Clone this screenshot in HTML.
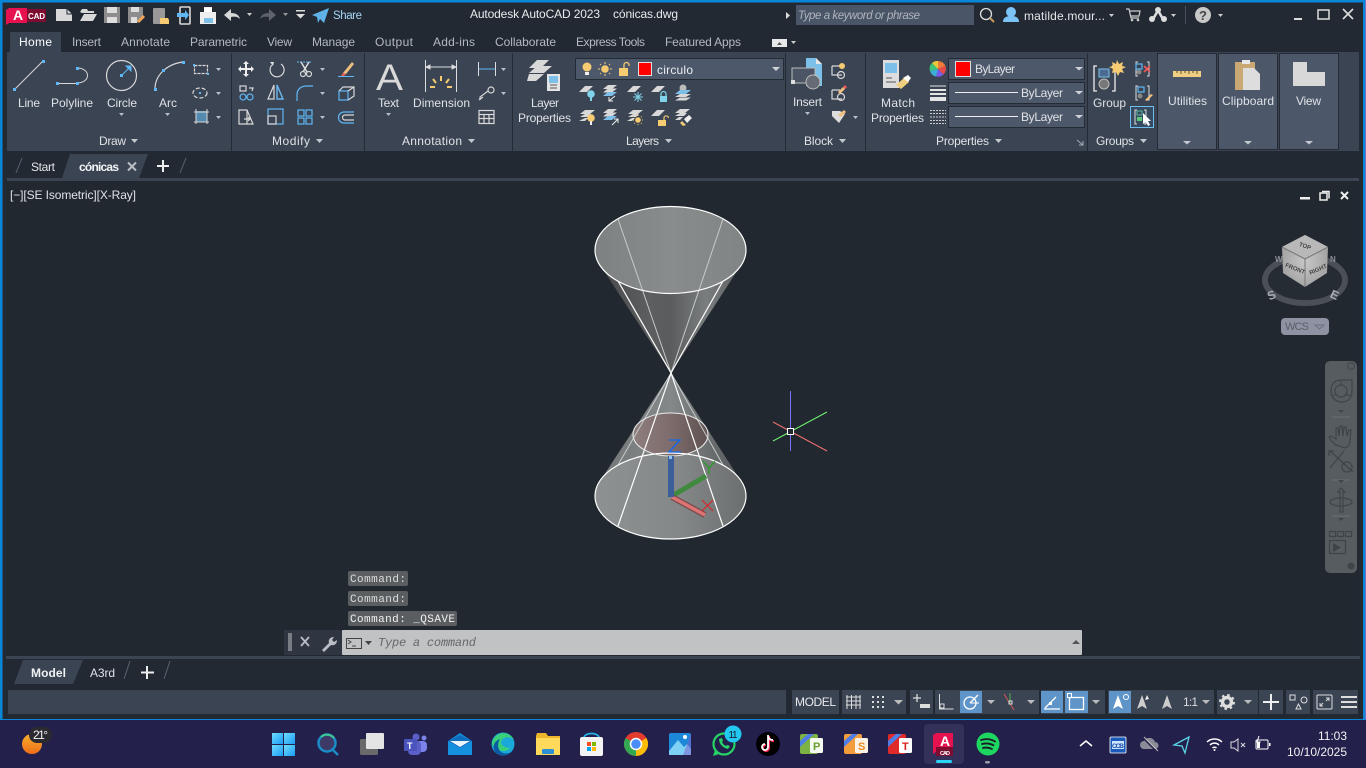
<!DOCTYPE html>
<html><head><meta charset="utf-8"><title>AutoCAD</title>
<style>
html,body{margin:0;padding:0;background:#222933;overflow:hidden}
svg{display:block;position:absolute;left:0;top:0}
text{font-family:"Liberation Sans",sans-serif;font-size:12px;fill:#dfe2e6}
.t{fill:#b4b9c1}
.m{font-family:"Liberation Mono",monospace;font-size:11px;fill:#dcdcdc}
.b{font-weight:bold}
.g{fill:none;stroke:#d8d8d8;stroke-width:1.2}
.u{fill:none;stroke:#5fb8f5;stroke-width:1.2}
.f{fill:#d8d8d8}
.c{fill:#b9bdc4}
.bl{fill:#5fb8f5}
.y{fill:#f6cb72}
</style></head><body>
<svg width="1366" height="768" viewBox="0 0 1366 768" xmlns="http://www.w3.org/2000/svg">
<defs>
<linearGradient id="g1" x1="0" x2="1" y1="0" y2="0"><stop offset="0" stop-color="#7d8182"/><stop offset=".5" stop-color="#888c8c"/><stop offset="1" stop-color="#808484"/></linearGradient>
<linearGradient id="g2" x1="0" x2="1" y1="0" y2="0"><stop offset="0" stop-color="#48494b"/><stop offset=".35" stop-color="#5c5e5f"/><stop offset=".5" stop-color="#5a5c5d"/><stop offset=".75" stop-color="#7a7d7e"/><stop offset="1" stop-color="#5c5f60"/></linearGradient>
<linearGradient id="g3" x1="0" x2="1" y1="0" y2="0"><stop offset="0" stop-color="#8d9191"/><stop offset=".55" stop-color="#858888"/><stop offset="1" stop-color="#6b6e6f"/></linearGradient>
<linearGradient id="g4" x1="0" x2="1" y1="0" y2="0"><stop offset="0" stop-color="#737778"/><stop offset=".5" stop-color="#848889"/><stop offset="1" stop-color="#55595a"/></linearGradient>
<linearGradient id="g5" x1="0" x2="1" y1="0" y2="0"><stop offset="0" stop-color="#8e7e7e"/><stop offset=".5" stop-color="#7e6c6c"/><stop offset="1" stop-color="#5f5252"/></linearGradient>
<linearGradient id="win" x1="0" x2="1" y1="0" y2="1"><stop offset="0" stop-color="#6fdcff"/><stop offset="1" stop-color="#1a9cf5"/></linearGradient>
<linearGradient id="sun" x1="0" x2="0" y1="0" y2="1"><stop offset="0" stop-color="#f5b12c"/><stop offset="1" stop-color="#ef6b1a"/></linearGradient>
<radialGradient id="cube" cx=".5" cy=".5" r=".6"><stop offset="0" stop-color="#c8c8c8"/><stop offset="1" stop-color="#9d9d9d"/></radialGradient>
<path id="cr" d="M0 0h5l-2.500 3z"/>
</defs>

<!-- frame -->
<rect width="1366" height="768" fill="#222933"/>
<rect x="0" y="0" width="1366" height="2.500" fill="#0a86d8"/>
<rect x="0" y="0" width="2.500" height="720" fill="#0a86d8"/>
<rect x="1363" y="0" width="2" height="720" fill="#0a86d8"/>
<rect x="1365" y="0" width="1" height="720" fill="#6f74c8"/>
<rect x="0" y="719" width="1366" height="1.500" fill="#0a86d8"/>

<!-- QAT -->
<path d="M6 10l3-2h18v15H9l-3 2z" fill="#e5124f"/><rect x="27" y="9" width="19" height="13" fill="#7d0c30"/>
<text x="13" y="20" class="b" style="font-size:14px;fill:#fff">A</text>
<text x="28" y="19" class="b" style="font-size:8px;fill:#fff" textLength="17">CAD</text>
<path d="M56 9h11l5 5v7H56z" class="f"/><path d="M67 9v5h5" fill="none" stroke="#222933"/>
<path d="M80 12l2-3h5l1 2h6v2H84l-2 0zM80 21l4-7h13l-4 7z" class="f"/>
<path d="M104 7h16v16h-16z" fill="#8d8d8d"/><rect x="107" y="7" width="10" height="6" fill="#ddd"/><rect x="107" y="17" width="10" height="6" fill="#ddd"/>
<path d="M128 7h15v10l-6 6h-9z" fill="#8d8d8d"/><rect x="131" y="7" width="8" height="5" fill="#ddd"/><rect x="131" y="17" width="6" height="6" fill="#ddd"/><path d="M137 21l6-6 2 2-6 6z" fill="#f2a65a"/>
<rect x="153" y="8" width="12" height="16" rx="1" fill="#999"/><path d="M160 18h8l1 2v4h-9z" fill="#f6cb72"/>
<rect x="180" y="7" width="10" height="17" rx="1" fill="none" stroke="#d8d8d8" stroke-width="1.600"/><path d="M177 13h8v-3l4 5-4 5v-3h-8z" fill="#5fb8f5"/>
<path d="M204 7h8v5h4v12h-16V12h4z" fill="#eee"/><rect x="204" y="8" width="8" height="4" fill="#fff"/><rect x="204" y="18" width="9" height="5" fill="#7cc0ea"/>
<path d="M224 15l7-6v4c5 0 8 2 9 6-2-2-5-3-9-2v4z" class="f"/><use href="#cr" x="247" y="13" fill="#ccc"/>
<path d="M276 15l-7-6v4c-5 0-8 2-9 6 2-2 5-3 9-2v4z" fill="#5e636b"/><use href="#cr" x="283" y="13" fill="#999"/>
<rect x="296" y="10" width="9" height="1.500" fill="#ddd"/><path d="M296 14h9l-4.500 4.500z" fill="#ddd"/>
<path d="M329 8l-5 15-4-4-2 4-1-6-5-2z" fill="#5fb3e8"/>
<text x="333" y="19" textLength="29" style="fill:#a4d5f5;font-size:11.500px">Share</text>
<text x="470" y="18" textLength="130" style="fill:#e8eaec">Autodesk AutoCAD 2023</text>
<text x="613" y="18" textLength="65" style="fill:#e8eaec">cónicas.dwg</text>
<path d="M786 12l4 3.500-4 3.500z" fill="#ddd"/>
<rect x="796" y="5" width="178" height="20" fill="#4a5567"/>
<text x="798" y="19" textLength="122" style="font-style:italic;fill:#b0b5bc;font-size:11.500px">Type a keyword or phrase</text>
<circle cx="986" cy="14" r="5.500" fill="none" stroke="#ddd" stroke-width="1.300"/><path d="M990 18l4 4" stroke="#c49a5c" stroke-width="2"/>
<circle cx="1011" cy="12" r="5" fill="#7cc4f7"/><path d="M1003 22c0-5 4-6 8-6s8 1 8 6z" fill="#7cc4f7"/>
<text x="1024" y="20" textLength="81" style="fill:#e4e6e9">matilde.mour...</text><use href="#cr" x="1109" y="14" fill="#ccc"/>
<path d="M1126 9h3l2 9h8M1130 11h10l-1 5h-8" fill="none" stroke="#ccc" stroke-width="1.200"/><circle cx="1132" cy="20" r="1.300" fill="#ccc"/><circle cx="1138" cy="20" r="1.300" fill="#ccc"/>
<path d="M1158 8l7 12h-3l-4-7-4 7h-3z" fill="#ddd"/><circle cx="1152" cy="19" r="3" fill="#ddd"/><circle cx="1164" cy="19" r="3" fill="#ddd"/><circle cx="1158" cy="10" r="3" fill="#ddd"/><use href="#cr" x="1171" y="14" fill="#ccc"/>
<rect x="1185" y="6" width="1" height="18" fill="#4a5260"/>
<circle cx="1203" cy="15" r="8" fill="#c8c8c8"/><text x="1199" y="20" class="b" style="font-size:13px;fill:#444">?</text><use href="#cr" x="1218" y="14" fill="#ccc"/>
<rect x="1294" y="18" width="8" height="2" fill="#ddd"/>
<rect x="1318" y="10" width="11" height="9" fill="none" stroke="#ddd" stroke-width="1.500"/>
<path d="M1343 9l10 10M1353 9l-10 10" stroke="#ddd" stroke-width="1.600"/>

<!-- tabs -->
<rect x="10" y="32" width="51" height="20" fill="#3b4453"/>
<text x="19" y="46" textLength="33" style="fill:#fff">Home</text>
<text class="t" x="72" y="46" textLength="29">Insert</text>
<text class="t" x="121" y="46" textLength="49">Annotate</text>
<text class="t" x="190" y="46" textLength="57">Parametric</text>
<text class="t" x="267" y="46" textLength="25">View</text>
<text class="t" x="312" y="46" textLength="43">Manage</text>
<text class="t" x="375" y="46" textLength="38">Output</text>
<text class="t" x="433" y="46" textLength="42">Add-ins</text>
<text class="t" x="495" y="46" textLength="61">Collaborate</text>
<text class="t" x="576" y="46" textLength="69">Express Tools</text>
<text class="t" x="665" y="46" textLength="76">Featured Apps</text>
<rect x="772" y="39" width="15" height="8" fill="#e8e8e8"/><path d="M777 45l2.500-3 2.500 3z" fill="#555"/><use href="#cr" x="791" y="41" fill="#ccc"/>

<!-- ribbon -->
<rect x="7" y="52" width="1352" height="99" fill="#3b4453"/>
<g fill="#252b35"><rect x="231" y="53" width="1" height="98"/><rect x="364" y="53" width="1" height="98"/><rect x="512" y="53" width="1" height="98"/><rect x="785" y="53" width="1" height="98"/><rect x="865" y="53" width="1" height="98"/><rect x="1087" y="53" width="1" height="98"/></g>
<g fill="#4c576a" stroke="#252b35"><rect x="1157.500" y="53.500" width="59" height="96"/><rect x="1218.500" y="53.500" width="59" height="96"/><rect x="1279.500" y="53.500" width="59" height="96"/></g>

<!-- Draw -->
<path d="M15 89L43 61" stroke="#d8d8d8"/><g class="bl"><rect x="13" y="88" width="3" height="3"/><rect x="42" y="60" width="3" height="3"/></g>
<path d="M58 83.500h19M77 68c14 0 14 15 0 15" stroke="#d8d8d8" fill="none"/><g class="bl"><rect x="56" y="82" width="3" height="3"/><rect x="76" y="82" width="3" height="3"/><rect x="76" y="67" width="3" height="3"/></g>
<circle cx="121.500" cy="75.500" r="15" class="g"/><rect x="120" y="74" width="3" height="3" class="bl"/><path d="M122 75l8-8M126 66h5v5z" stroke="#5fb8f5" fill="#5fb8f5"/>
<path d="M155 89c0-14 12-25 28-27" class="g"/><g class="bl"><rect x="154" y="88" width="3" height="3"/><rect x="162" y="69" width="3" height="3"/><rect x="182" y="61" width="3" height="3"/></g>
<rect x="194.500" y="65.500" width="13" height="8" class="g" stroke-dasharray="3 1"/><g class="bl"><rect x="193" y="64" width="2" height="2"/><rect x="207" y="73" width="2" height="2"/></g><use href="#cr" x="216" y="68" class="c"/>
<ellipse cx="200" cy="93" rx="7" ry="5" class="g" stroke-dasharray="4 2"/><rect x="199" y="92" width="2" height="2" class="bl"/><use href="#cr" x="216" y="92" class="c"/>
<rect x="196" y="111" width="11" height="11" fill="#5fa8d8" opacity=".7"/><path d="M194 112h15M194 122h15M196 109v15M207 109v15" stroke="#d8d8d8"/><use href="#cr" x="216" y="116" class="c"/>
<text x="18" y="107" textLength="22">Line</text><text x="51" y="107" textLength="42">Polyline</text><text x="107" y="107" textLength="30">Circle</text><text x="159" y="107" textLength="18">Arc</text>
<use href="#cr" x="119" y="113" class="c"/><use href="#cr" x="165" y="113" class="c"/>
<text x="99" y="145" textLength="27">Draw</text><path d="M131 139h7l-3.500 4z" fill="#c4c8cf"/>

<!-- Modify -->
<path d="M246 61l3 3h-2v4h4v-2l3 3-3 3v-2h-4v4h2l-3 3-3-3h2v-4h-4v2l-3-3 3-3v2h4v-4h-2z" fill="#eee"/>
<path d="M281 64a7 7 0 1 1-9 1" class="g" stroke-width="1.400"/><path d="M270 62l4 0 -1 4z" fill="#ddd"/>
<path d="M297 62h14" stroke="#5fb8f5" stroke-dasharray="2 1"/><path d="M301 62l6 10M309 62l-6 10" stroke="#ddd" stroke-width="1.500"/><circle cx="303" cy="74" r="2.500" class="g"/><circle cx="309" cy="74" r="2.500" class="g"/><use href="#cr" x="320" y="68" class="c"/>
<path d="M343 73l9-11 2 2-8 10z" fill="#f0c080"/><path d="M341 76l2-3 3 1-2 2z" fill="#ef5a5a"/><path d="M338 76.500h16" stroke="#5fb8f5"/>
<rect x="240" y="86" width="6" height="5" class="g"/><path d="M249 88h4l-1 3" class="g"/><circle cx="243" cy="97" r="3" class="u"/><circle cx="250" cy="97" r="3" class="u"/>
<path d="M274 85v14h-6zM277 85v14h6z" class="g"/><path d="M277 85v14h6z" class="u"/>
<path d="M297 101v-6c0-6 4-9 10-9h6" class="u"/><use href="#cr" x="320" y="92" class="c"/>
<rect x="339" y="91" width="9" height="9" class="u"/><path d="M339 91l4-4h11v9l-6 4M348 91l6-4" class="g"/>
<path d="M239 110h8l6 14h-14z" class="g"/><path d="M247 110v14" class="g"/><path d="M244 119h6l-2-2m2 2l-2 2" class="g"/>
<rect x="268" y="109" width="15" height="15" class="u"/><rect x="268" y="116" width="8" height="8" class="g"/>
<g class="u"><rect x="298" y="110" width="6" height="6"/><rect x="306" y="110" width="6" height="6"/><rect x="298" y="118" width="6" height="6"/><rect x="306" y="118" width="6" height="6"/></g><use href="#cr" x="320" y="116" class="c"/>
<path d="M354 112h-10a5 5 0 0 0 0 11h10" class="u"/><path d="M354 115h-9a2.500 2.500 0 0 0 0 5h9" class="g"/>
<text x="272" y="145" textLength="38">Modify</text><path d="M316 139h7l-3.500 4z" fill="#c4c8cf"/>

<!-- Annotation -->
<text x="376" y="90" style="font-size:37px;fill:#d8d8d8" textLength="27" lengthAdjust="spacingAndGlyphs">A</text>
<text x="378" y="107" textLength="21">Text</text><use href="#cr" x="386" y="113" class="c"/>
<path d="M425.500 60v32M456.500 60v32" stroke="#ddd"/><path d="M426 67h30M426 67l4-2v4zM456 67l-4-2v4z" stroke="#ddd" fill="#ddd"/>
<path d="M441 76v5M433 79l3 4M449 79l-3 4M430 87h5M447 87h5" stroke="#f6cb72" stroke-width="2"/>
<text x="413" y="107" textLength="57">Dimension</text>
<path d="M478.500 62v14M495.500 62v14" stroke="#ddd"/><path d="M479 69h16" stroke="#5fb8f5"/><use href="#cr" x="501" y="68" class="c"/>
<circle cx="491" cy="90" r="3" class="g"/><path d="M488 91l-8 6v3M479 100l4-3" class="g"/><use href="#cr" x="501" y="92" class="c"/>
<path d="M479 110.500h15v13h-15zM479 114.500h15M479 118.500h15M484 114v9M489 114v9" class="g" stroke-width="1"/>
<text x="402" y="145" textLength="60">Annotation</text><path d="M468 139h7l-3.500 4z" fill="#c4c8cf"/>

<!-- Layers -->
<path d="M537 60h12l-8 8h-12z" class="f"/><path d="M537 66h15l-8 7h-15z" class="f"/><path d="M529 74h15l-8 7h-9z" class="f"/>
<rect x="547" y="74" width="13" height="17" fill="#e4e4e4"/><rect x="549" y="76" width="9" height="7" fill="#7cc0ea"/><path d="M550 85h7M550 88h7" stroke="#555"/>
<text x="531" y="107" textLength="28">Layer</text><text x="518" y="122" textLength="53">Properties</text>
<rect x="575.500" y="58.500" width="208" height="21" fill="#4d586a" stroke="#252b35"/>
<circle cx="587" cy="67" r="4.500" class="y"/><rect x="585" y="72" width="4" height="3" fill="#eee"/>
<circle cx="605" cy="69" r="3.800" class="y"/><path d="M605 62v2M605 74v2M598 69h2M610 69h2M600 64l1 1M609 73l1 1M610 64l-1 1M601 73l-1 1" stroke="#f6cb72"/>
<path d="M619 68h9v8h-9z" class="y"/><path d="M624 68v-3a2.500 2.500 0 0 1 5 0v1" fill="none" stroke="#f6cb72" stroke-width="1.300"/>
<rect x="638.500" y="62.500" width="13" height="13" fill="#f00" stroke="#ddd"/>
<text x="657" y="74" textLength="36" style="fill:#eceef0">circulo</text><path d="M772 67h8l-4 4z" fill="#d0d4da"/>
<!-- layer row 1 -->
<path d="M585 86h8l-6 6h-8z" class="f"/><circle cx="591" cy="94" r="3.800" fill="#7fd3ea"/><rect x="590" y="97" width="2" height="4" fill="#7fd3ea"/>
<g class="f"><path d="M608 85h9l-5 4h-9z"/><path d="M608 88.500h9l-5 4h-9z"/></g><path d="M608 92h9l-5 4h-9z" fill="#7cc0ea"/><path d="M609 101l6-5M609 97v4h4" stroke="#eee" fill="none"/>
<path d="M633 86h8l-6 6h-8z" class="f"/><path d="M638 92v10M633 97h10M634.500 93.500l7 7M641.500 93.500l-7 7" stroke="#7fd3ea"/>
<path d="M657 86h8l-6 6h-8z" class="f"/><rect x="660" y="96" width="7" height="6" fill="#7fd3ea"/><path d="M661 96v-2a2.500 2.500 0 0 1 5 0v2" fill="none" stroke="#7fd3ea" stroke-width="1.200"/>
<circle cx="683" cy="88" r="3.500" fill="#bbb"/><path d="M680 90h11l-5 4h-11z" fill="#7cc0ea"/><path d="M680 94h11l-5 3h-11zM680 97.500h11l-5 3h-11z" class="f"/>
<!-- layer row 2 -->
<g class="f"><path d="M585 110h10l-5 4h-10z"/><path d="M585 114h6l-3 3h-8z"/><path d="M585 118h3l-3 3h-6z"/></g><circle cx="591" cy="118" r="3.800" class="y"/><rect x="590" y="121" width="2" height="4" fill="#eee"/>
<g class="f"><path d="M608 109h9l-5 4h-9z"/><path d="M608 112.500h9l-5 4h-9z"/></g><path d="M608 116h9l-5 4h-9z" fill="#7cc0ea"/><path d="M612 125l6-6M614 119h4v4" stroke="#eee" fill="none"/>
<g class="f"><path d="M633 110h10l-5 4h-10z"/><path d="M633 114h6l-3 3h-8z"/><path d="M632 118h3l-3 3h-5z"/></g><circle cx="638" cy="120" r="2.800" class="y"/><path d="M638 115v1M638 124v1M633 120h1M642 120h1M634.500 116.500l.7.7M641 123l.7.7M641.700 116.500l-.7.7M635 123l-.7.7" stroke="#f6cb72"/>
<path d="M657 110h8l-6 6h-8z" class="f"/><rect x="658" y="120" width="8" height="6" class="y"/><path d="M664 120v-2a2.200 2.200 0 0 1 4.400 0" fill="none" stroke="#f6cb72" stroke-width="1.200"/>
<g class="f"><path d="M680 109h10l-5 4h-10z"/><path d="M680 113h7l-3 3h-9z"/><path d="M679 117h4l-3 3h-5z"/></g><path d="M684 119l5-4 3 3-5 5z" fill="#eee"/><path d="M682 121l4 4-3 1-3-3z" fill="#f0c878"/>
<text x="626" y="145" textLength="33">Layers</text><path d="M665 139h7l-3.500 4z" fill="#c4c8cf"/>

<!-- Block -->
<path d="M806 58h10l6 6v22h-16z" fill="#7cc0ea"/><path d="M816 58l6 6h-6z" fill="#e6e6e6"/>
<rect x="792" y="68" width="23" height="15" fill="#4c5566" stroke="#bbb"/><rect x="791" y="80" width="4" height="4" fill="#ddd"/>
<circle cx="813" cy="82" r="7" fill="#666c76" stroke="#bbb"/>
<text x="793" y="106" textLength="29">Insert</text><use href="#cr" x="805" y="112" class="c"/>
<path d="M832 66h8M832 66v9h10" class="g"/><circle cx="841" cy="75" r="3.500" class="g"/><circle cx="842" cy="66" r="3" class="y"/>
<path d="M832 90h8M832 90v9h10" class="g"/><circle cx="841" cy="97" r="3.500" class="g"/><path d="M838 92l5-5 2 2-5 5z" fill="#f0c080"/><path d="M843 87l2-2 2 2-2 2z" fill="#ef5a5a"/>
<path d="M832 111h8l5 3-6 9-7-7z" fill="#ddd"/><path d="M838 115l6-5 2 2-5 5z" fill="#f0c080"/><use href="#cr" x="853" y="116" class="c"/>
<text x="804" y="145" textLength="29">Block</text><path d="M839 139h7l-3.500 4z" fill="#c4c8cf"/>

<!-- Properties -->
<rect x="883" y="60" width="16" height="28" fill="#ddd"/><rect x="885" y="63" width="12" height="10" fill="#7cc0ea"/><path d="M886 78h6M886 82h10" stroke="#555"/>
<path d="M896 85l8-7 5 4-8 7z" fill="#f0d080"/><path d="M903 78l5-3 3 3-3 4z" fill="#fff"/>
<text x="881" y="107" textLength="34">Match</text><text x="871" y="122" textLength="53">Properties</text>
<path d="M938 61a8 8 0 0 1 7.500 5L938 69z" fill="#ef7a3a"/><path d="M945.500 66a8 8 0 0 1-2 8.500L938 69z" fill="#e84a4a"/><path d="M943.500 74.500a8 8 0 0 1-7.500 2L938 69z" fill="#7a5ae8"/><path d="M936 76.500a8 8 0 0 1-6-5.500l8-2z" fill="#3ab0d8"/><path d="M930 71a8 8 0 0 1 2-8l6 6z" fill="#3ec47a"/><path d="M932 63a8 8 0 0 1 6-2v8z" fill="#e8c83a"/>
<g fill="#4d586a" stroke="#252b35"><rect x="948.500" y="58.500" width="136" height="21"/><rect x="948.500" y="82.500" width="136" height="21"/><rect x="948.500" y="106.500" width="136" height="21"/></g>
<rect x="955.500" y="61.500" width="15" height="15" fill="#f00" stroke="#ddd"/>
<text x="975" y="73" textLength="40">ByLayer</text>
<path d="M955 92.500h63M955 116.500h63" stroke="#eee"/>
<text x="1021" y="97" textLength="42">ByLayer</text><text x="1021" y="121" textLength="42">ByLayer</text>
<g fill="#d0d4da"><path d="M1075 67h8l-4 3.500z"/><path d="M1075 91h8l-4 3.500z"/><path d="M1075 115h8l-4 3.500z"/></g>
<path d="M930 85.500h16v1h-16zM930 89h16v2h-16zM930 93h16v2h-16zM930 97h16v4h-16z" fill="#e4e4e4"/>
<path d="M930 110.500h16M930 113.500h16M930 117h16M930 120.500h16M930 123.500h16" stroke="#ccc" stroke-dasharray="2 1"/>
<text x="936" y="145" textLength="53">Properties</text><path d="M995 139h7l-3.500 4z" fill="#c4c8cf"/>
<path d="M1077 140l6 5M1083 141v4h-4" stroke="#aab" fill="none"/>

<!-- Groups -->
<path d="M1097 66h-3v25h3M1112 66h3v25h-3" stroke="#eee" fill="none" stroke-width="1.300"/>
<rect x="1099" y="69" width="10" height="8" fill="#4c6a90" stroke="#7cc0ea"/><circle cx="1104" cy="84" r="5" fill="#777" stroke="#bbb"/>
<path d="M1117 60l2 4 4-2-1 4 4 1-4 2 2 4-4-1-2 4-2-4-4 1 1-4-4-2 4-1-1-4 4 2z" class="y"/>
<text x="1093" y="107" textLength="33">Group</text>
<path d="M1138 62h-2v14h2M1147 62h2v14h-2" stroke="#ddd" fill="none"/><rect x="1136" y="64" width="6" height="5" class="u"/><circle cx="1139" cy="72" r="2.500" fill="#888"/><path d="M1144 66l6 6M1150 66l-6 6" stroke="#ef5a5a" stroke-width="1.600"/>
<path d="M1138 86h-2v14h2M1147 86h2v14h-2" stroke="#ddd" fill="none"/><rect x="1138" y="87" width="6" height="5" class="u"/><circle cx="1140" cy="96" r="2.500" fill="#888"/><path d="M1145 100l6-6 2 1-6 6z" fill="#f0c080"/>
<rect x="1130.500" y="106.500" width="23" height="21" fill="#364a60" stroke="#6fbcf0"/>
<path d="M1137 110h-2v14h2M1144 110h2v14h-2" stroke="#ddd" fill="none"/><rect x="1137" y="111" width="5" height="4" fill="none" stroke="#5fb8a0"/><rect x="1137" y="117" width="5" height="4" fill="#5ec87a"/>
<path d="M1143 113v11l3-2 2 4 2-1-2-4h3z" fill="#fff"/>
<text x="1096" y="145" textLength="38">Groups</text><path d="M1140 139h7l-3.500 4z" fill="#c4c8cf"/>

<!-- slideouts -->
<rect x="1173" y="71" width="28" height="6" fill="#f0d080"/><path d="M1177 71v2M1181 71v3M1185 71v2M1189 71v3M1193 71v2M1197 71v3" stroke="#5a5030"/>
<text x="1168" y="105" textLength="39">Utilities</text>
<path d="M1235 62h20v28h-20z" fill="#c9a873"/><rect x="1242" y="60" width="8" height="4" fill="#e8e8e8"/><path d="M1243 68h11l6 6v16h-17z" fill="#ddd"/>
<text x="1222" y="105" textLength="52">Clipboard</text>
<path d="M1293 62h14v10h18v14h-32z" fill="#d8d8d8"/>
<text x="1296" y="105" textLength="25">View</text>
<g fill="#c4c8cf"><path d="M1183 141h8l-4 3.500z"/><path d="M1244 141h8l-4 3.500z"/><path d="M1305 141h8l-4 3.500z"/></g>

<!-- doc tabs -->
<path d="M16 173l6-15M180 173l6-15" stroke="#5a6270"/>
<text x="31" y="171" textLength="24" style="fill:#e4e6e9">Start</text>
<path d="M62 178l8-24h78l-9 24z" fill="#3b4453"/>
<text x="79" y="171" class="b" textLength="40" style="fill:#f2f4f6">cónicas</text>
<path d="M128 162.500l8 8M136 162.500l-8 8" stroke="#b9bdc4" stroke-width="2"/>
<path d="M163 160v12M157 166h12" stroke="#eee" stroke-width="2"/>
<rect x="7" y="178" width="1352" height="3" fill="#3b4453"/>

<!-- canvas -->
<rect x="7" y="181" width="1352" height="475" fill="#212830"/>
<text x="10" y="199" textLength="126" style="fill:#dfe2e6">[−][SE Isometric][X-Ray]</text>

<!-- cones -->
<polygon points="671,373 600,265 741,265" fill="url(#g2)"/>
<ellipse cx="670.500" cy="250" rx="75.500" ry="43.500" fill="url(#g1)"/>
<path d="M671 373L618 219M671 373L723 219" stroke="#c6caca" stroke-width="1"/>
<path d="M671 373L618 281M671 373L723 281" stroke="#fff" stroke-width="1.200"/>
<ellipse cx="670.500" cy="250" rx="75.500" ry="43.500" fill="none" stroke="#fff" stroke-width="1.200"/>
<polygon points="671,373 600,481 741,481" fill="url(#g4)"/>
<ellipse cx="670.500" cy="496" rx="75.500" ry="43" fill="url(#g3)"/>
<ellipse cx="670.500" cy="434.500" rx="37.500" ry="21.500" fill="url(#g5)"/>
<path d="M671 373L618 465M671 373L723 465" stroke="#c6caca"/>
<path d="M671 373L618 526M671 373L723 526" stroke="#fff" stroke-width="1.200"/>
<ellipse cx="670.500" cy="434.500" rx="37.500" ry="21.500" fill="none" stroke="#e8e8e8" stroke-width="1.100"/>
<ellipse cx="670.500" cy="496" rx="75.500" ry="43" fill="none" stroke="#fff" stroke-width="1.200"/>
<!-- UCS -->
<path d="M672 496L706 476" stroke="#3f8a3f" stroke-width="5"/>
<path d="M672 497L705 515" stroke="#7a4a4a" stroke-width="6"/>
<path d="M672 497L705 515" stroke="#dc7474" stroke-width="3.500"/>
<rect x="668" y="456" width="6" height="41" fill="#3a5f9a"/><rect x="669" y="456" width="3" height="3" fill="#8fc0f0"/>
<path d="M669 440h11l-11 12h12" fill="none" stroke="#1068f0" stroke-width="1.300"/>
<path d="M703 461l6 7 6-7M709 468v6" fill="none" stroke="#20a020" stroke-width="1.200"/>
<path d="M702 500l11 11M713 500l-11 11" stroke="#e02020" stroke-width="1"/>
<!-- crosshair -->
<path d="M790.500 391v60" stroke="#7474ff"/>
<path d="M773 441L827 412" stroke="#70f070"/>
<path d="M773 422L827 451" stroke="#f07070"/>
<rect x="787.500" y="428.500" width="6" height="6" fill="#212830" stroke="#fff"/>

<!-- viewport controls -->
<rect x="1300" y="197" width="10" height="2.500" fill="#eee"/>
<rect x="1320" y="193" width="7" height="7" fill="none" stroke="#eee" stroke-width="1.500"/><path d="M1322 191.500h7v7" fill="none" stroke="#eee" stroke-width="1.500"/>
<path d="M1341 192l7 7M1348 192l-7 7" stroke="#eee" stroke-width="2"/>

<!-- viewcube -->
<ellipse cx="1305" cy="280" rx="40" ry="23" fill="none" stroke="#4b5056" stroke-width="6"/>
<ellipse cx="1305" cy="280" rx="36" ry="20" fill="#262c34"/>
<path d="M1305 235l23 12-1 26-22 14-22-14-1-26z" fill="url(#cube)"/>
<path d="M1305 235l23 12-23 12-23-12z" fill="#b8b8b8"/>
<path d="M1282 247l23 12 23-12M1305 259v28" stroke="#777" fill="none"/>
<text x="1299" y="248" transform="rotate(20 1305 246)" style="font-size:6px;fill:#444" class="b">TOP</text>
<text x="1285" y="270" transform="rotate(22 1294 268)" style="font-size:6px;fill:#444" class="b">FRONT</text>
<text x="1308" y="272" transform="rotate(-24 1316 268)" style="font-size:6px;fill:#444" class="b">RIGHT</text>
<text x="1267" y="299" class="b" style="font-size:12px;fill:#a8acb2" transform="rotate(-25 1272 294)">S</text>
<text x="1331" y="299" class="b" style="font-size:12px;fill:#a8acb2" transform="rotate(25 1335 294)">E</text>
<text x="1330" y="262" class="b" style="font-size:8px;fill:#8a8e94">N</text>
<text x="1275" y="262" class="b" style="font-size:8px;fill:#8a8e94">W</text>
<rect x="1281" y="318" width="48" height="17" rx="4" fill="#8e92a2"/>
<text x="1285" y="330" textLength="24" style="font-size:11px;fill:#5c606c">WCS</text>
<path d="M1315 325h9l-4.500 4z" fill="none" stroke="#6c707c"/>

<!-- navbar -->
<rect x="1325" y="361" width="32" height="212" rx="5" fill="#575c60"/>
<g fill="none" stroke="#3f4448" stroke-width="1.200">
<circle cx="1351" cy="366" r="3.500" stroke="#454a4e"/>
<path d="M1341 380c-6 0-10 4-10 11s5 11 11 11c7 0 10-5 10-12v-10z"/><circle cx="1341" cy="391" r="6"/><path d="M1332 396l5-2M1350 396l-5-2M1341 381v4"/>
<path d="M1332 417h18M1332 480h18M1332 516h18" stroke="#666b6f"/>
<path d="M1336 445c-4-3-6-6-7-8l2-1 5 3v-11l2 0 1 8 1-10h2l1 10 1-9h2l1 9 2-6h2l-1 10c0 4-2 7-5 8z"/>
<path d="M1330 451l23 21M1344 451l-14 17M1329 456v-5h5"/><circle cx="1347" cy="467" r="5"/>
<path d="M1341 488l-3 4h2v20h3v-20h2z"/><ellipse cx="1341" cy="502" rx="11" ry="4"/>
<path d="M1329.500 531.500h6v5h-6zM1337.500 531.500h6v5h-6zM1345.500 531.500h6v5h-6zM1329.500 540.500h16v13h-16z"/>
</g>
<path d="M1333 543l8 4.500-8 4.500z" fill="#3f4448"/>
<g fill="#3f4448"><path d="M1338 410h6l-3 3z"/><path d="M1338 480h6l-3 3z"/><path d="M1338 518h6l-3 3z"/></g>
<circle cx="1351" cy="566" r="3.500" fill="#3f4448"/>

<!-- command -->
<g fill="#5a5e61"><rect x="348" y="571" width="60" height="15" rx="2"/><rect x="348" y="591" width="60" height="15" rx="2"/><rect x="348" y="611" width="109" height="15" rx="2"/></g>
<text class="m" x="350" y="582" textLength="56">Command:</text>
<text class="m" x="350" y="602" textLength="56">Command:</text>
<text class="m" x="350" y="622" textLength="105" style="fill:#f0f0f0">Command: _QSAVE</text>
<rect x="284" y="630" width="58" height="25" fill="#2f3641"/>
<path d="M288 633h4v18h-4z" fill="#8b8f95" opacity=".8"/>
<path d="M301 637l8 9M309 637l-8 9" stroke="#b9bdc4" stroke-width="1.800"/>
<path d="M322 650l7-7c-1-3 1-6 5-6l-2 3 2 2 3-2c0 4-3 6-6 5l-7 7z" fill="#b9bdc4"/>
<rect x="342" y="630" width="740" height="25" rx="1" fill="#c0c2c4"/>
<rect x="346.500" y="638.500" width="15" height="10" fill="none" stroke="#444"/><path d="M348 640l3 2-3 2M352 646h4" stroke="#444" fill="none"/>
<path d="M365 641h7l-3.500 4z" fill="#444"/>
<text class="m" x="378" y="646" textLength="98" style="font-style:italic;fill:#666;font-size:12px">Type a command</text>
<path d="M1072 644l4-4 4 4z" fill="#555"/>

<!-- layout tabs -->
<rect x="6" y="656" width="1354" height="3" fill="#3b4453"/>
<path d="M14 684l9-24h60l-10 24z" fill="#3b4453"/>
<text x="31" y="677" class="b" textLength="35" style="fill:#f0f2f4">Model</text>
<text x="90" y="677" textLength="25">A3rd</text>
<path d="M124 679l6-18M164 679l6-18" stroke="#5a6270"/>
<path d="M147 666v13M141 672.500h13" stroke="#eee" stroke-width="2"/>

<!-- status bar -->
<rect x="8" y="690" width="778" height="24" fill="#3b4453"/>
<g fill="#3b4453"><rect x="792" y="690" width="47" height="24"/><rect x="842" y="690" width="64" height="24"/><rect x="910" y="690" width="23" height="24"/><rect x="935" y="690" width="104" height="24"/><rect x="1041" y="690" width="64" height="24"/><rect x="1108" y="690" width="106" height="24"/><rect x="1217" y="690" width="41" height="24"/><rect x="1259" y="690" width="24" height="24"/><rect x="1286" y="690" width="24" height="24"/><rect x="1313" y="690" width="45" height="24"/></g>
<g fill="#5e94c8"><rect x="960" y="691" width="22" height="22"/><rect x="1041" y="691" width="22" height="22"/><rect x="1065" y="691" width="23" height="22"/><rect x="1109" y="691" width="22" height="22"/></g>
<text x="795" y="706" textLength="41" style="fill:#e8eaec">MODEL</text>
<path d="M847 695v14M851.500 695v14M856 695v14M860 695v14M846 697h15M846 701h15M846 705h15" stroke="#ddd"/>
<g fill="#ddd"><rect x="872" y="696" width="2" height="2"/><rect x="877" y="696" width="2" height="2"/><rect x="882" y="696" width="2" height="2"/><rect x="872" y="701" width="2" height="2"/><rect x="877" y="701" width="2" height="2"/><rect x="882" y="701" width="2" height="2"/><rect x="872" y="706" width="2" height="2"/><rect x="877" y="706" width="2" height="2"/><rect x="882" y="706" width="2" height="2"/></g>
<path d="M894 700h9l-4.500 4.500z" fill="#bbb"/>
<path d="M917 694v8M913 698h8" stroke="#ddd" stroke-width="1.300"/><rect x="920" y="704" width="10" height="4" fill="#ddd"/>
<path d="M939.500 694v15h14" fill="none" stroke="#ddd"/><rect x="940" y="704" width="4" height="4" fill="none" stroke="#ddd"/>
<circle cx="970" cy="703" r="6" fill="none" stroke="#fff" stroke-width="1.300"/><path d="M970 703l8-8" stroke="#fff" stroke-width="1.300"/><path d="M970 703h9" stroke="#fff" stroke-width="1"/>
<path d="M987 700h8l-4 4z" fill="#bbb"/>
<path d="M1004 694l10 16" stroke="#d25555"/><path d="M1010 693v10" stroke="#4caf50"/><rect x="1009" y="701" width="3" height="3" fill="none" stroke="#ddd"/>
<path d="M1027 700h8l-4 4z" fill="#bbb"/>
<path d="M1044 709h16M1045 708l11-11" stroke="#fff" stroke-width="1.300" fill="none"/><rect x="1049" y="702" width="3" height="3" fill="#fff"/>
<rect x="1069.500" y="697.500" width="14" height="12" fill="none" stroke="#fff" stroke-width="1.300"/><rect x="1067.500" y="693.500" width="4" height="4" fill="#5e94c8" stroke="#fff"/>
<path d="M1092 700h8l-4 4z" fill="#bbb"/>
<path d="M1118 695l5 14-5-3-5 3z" fill="#fff"/><circle cx="1126" cy="697" r="2.500" fill="none" stroke="#fff"/>
<path d="M1142 695l5 14-5-3-5 3z" fill="#ccc"/><path d="M1147 695l-2 5 4-1z" fill="#eee"/>
<path d="M1167 695l5 14-5-3-5 3z" fill="#ccc"/>
<text x="1183" y="706" textLength="15" style="fill:#ddd">1:1</text><path d="M1202 700h8l-4 4z" fill="#bbb"/>
<circle cx="1227" cy="702" r="4.500" fill="none" stroke="#ddd" stroke-width="3.500"/><circle cx="1227" cy="702" r="7" fill="none" stroke="#ddd" stroke-width="2" stroke-dasharray="2.500 3"/>
<path d="M1244 700h8l-4 4z" fill="#bbb"/>
<path d="M1271 694v16M1263 702h16" stroke="#eee" stroke-width="2"/>
<rect x="1290" y="695" width="5" height="5" fill="none" stroke="#ddd"/><circle cx="1304" cy="700" r="3" fill="none" stroke="#ddd"/><path d="M1296 709l2.500-5 2.500 5z" fill="none" stroke="#ddd"/>
<rect x="1317" y="695" width="15" height="14" rx="1" fill="none" stroke="#ddd"/><path d="M1320 706l3-3M1320 703v3h3M1329 698l-3 3M1329 701v-3h-3" stroke="#ddd" fill="none"/>
<path d="M1341 696h16v2h-16zM1341 701h16v2h-16zM1341 706h16v2h-16z" fill="#ddd"/>

<!-- taskbar -->
<rect x="0" y="720" width="1366" height="48" fill="#23204b"/>
<circle cx="32" cy="744" r="10" fill="url(#sun)"/>
<rect x="29" y="727" width="23" height="16" rx="8" fill="#2b2a30"/>
<text x="33" y="739" textLength="15" style="fill:#f2f2f2">21°</text>
<g fill="url(#win)"><rect x="272" y="733" width="11" height="11"/><rect x="284" y="733" width="11" height="11"/><rect x="272" y="745" width="11" height="11"/><rect x="284" y="745" width="11" height="11"/></g>
<circle cx="327" cy="743" r="8.500" fill="#3d3a68" stroke="#1c8cc8" stroke-width="2.500"/><path d="M333 750l5 5" stroke="#1c8cc8" stroke-width="2.500"/><path d="M321 737a9 9 0 0 1 13 1" stroke="#3ec890" stroke-width="2" fill="none"/>
<rect x="360" y="739" width="18" height="16" rx="1.500" fill="#6a6a6a"/><rect x="366" y="733" width="18" height="16" rx="1" fill="#e4e4e4"/>
<circle cx="424" cy="738" r="2.500" fill="#7b83eb"/><circle cx="416" cy="737" r="3.500" fill="#5b5fc7"/><rect x="416" y="741" width="11" height="11" rx="4" fill="#7b83eb"/><rect x="408" y="741" width="13" height="14" rx="4" fill="#5b5fc7"/><rect x="404" y="739" width="13" height="12" rx="1" fill="#4b53bc"/><text x="407" y="749" class="b" style="font-size:9px;fill:#fff">T</text>
<path d="M448 741l12-8 12 8v14h-24z" fill="#1490df"/><path d="M448 741l12 7 12-7-12-6z" fill="#0f6cbd"/><path d="M450 741h20l-10 6z" fill="#eaf4fb"/>
<circle cx="503" cy="744" r="11.500" fill="#1aa8d8"/><path d="M492 744a11.500 11.500 0 0 1 22-4c-3-4-12-4-13 2 0 4 5 6 9 6-4 5-14 4-18-4z" fill="#39d07a"/><path d="M495 752c-3-5-1-11 5-13-2 3-3 8 0 12 3 3 7 3 11 1-5 5-12 4-16 0z" fill="#0c59a4"/>
<path d="M536 736l1-3h9l2 3h12v19h-24z" fill="#eeb62b"/><rect x="536" y="738" width="24" height="17" fill="#ffd95a"/><rect x="542" y="749" width="12" height="5" rx="1" fill="#2d8fd5"/>
<path d="M584 738c0-6 15-6 15 0" fill="none" stroke="#22b5e8" stroke-width="1.800"/><rect x="580" y="737" width="23" height="19" rx="2" fill="#f4f4f4"/><rect x="587" y="742" width="4" height="4" fill="#f25022"/><rect x="592" y="742" width="4" height="4" fill="#7fba00"/><rect x="587" y="747" width="4" height="4" fill="#00a4ef"/><rect x="592" y="747" width="4" height="4" fill="#ffb900"/>
<circle cx="636" cy="744" r="12" fill="#e33b2e"/><path d="M636 744L625.600 738a12 12 0 0 0 10.400 18z" fill="#34a853"/><path d="M636 744l10.400-6a12 12 0 0 1-10.400 18z" fill="#fbbc05"/><circle cx="636" cy="744" r="5.500" fill="#4b8df8" stroke="#fff" stroke-width="1.500"/>
<rect x="669" y="733" width="22" height="22" rx="2" fill="#1e88d8"/><path d="M669 751l9-11 6 7 3-3 4 5v6h-22z" fill="#7fd0f5"/><circle cx="685" cy="737" r="2" fill="#fff"/><path d="M691 733v22h-8z" fill="#7a5ac8" opacity=".5"/>
<circle cx="724" cy="744" r="10.500" fill="none" stroke="#25d366" stroke-width="2.200"/><path d="M713 756l2-6 4 4z" fill="#25d366"/><path d="M719 739c0 5 4 9 9 10l2-3-3-1-1 1c-2-1-3-2-4-4l1-1-1-3z" fill="#25d366"/>
<circle cx="733" cy="734" r="8.500" fill="#22c8f0"/><text x="728.500" y="738" style="font-size:10px;fill:#1a1a2a" textLength="9">11</text>
<circle cx="768" cy="744" r="12" fill="#000"/><path d="M769 736v12a3 3 0 1 1-3-3M769 736c0 3 2 5 5 5" fill="none" stroke="#ff2a55" stroke-width="2"/><path d="M768 735v12a3 3 0 1 1-3-3M768 735c0 3 2 5 5 5" fill="none" stroke="#fff" stroke-width="1.800"/>
<rect x="800" y="734" width="18" height="20" rx="2" fill="#7cb342"/><path d="M800 741l8-7h6l-14 13z" fill="#4c7de8"/><rect x="810" y="738" width="13" height="15" rx="1.500" fill="#f4faf0"/><text x="813" y="750" class="b" style="font-size:11px;fill:#6a9e30">P</text>
<rect x="844" y="734" width="18" height="20" rx="2" fill="#f39c3c"/><path d="M844 741l8-7h6l-14 13z" fill="#4c7de8"/><rect x="855" y="738" width="13" height="15" rx="1.500" fill="#fdf1e4"/><text x="858" y="750" class="b" style="font-size:11px;fill:#e88a20">S</text>
<rect x="888" y="734" width="18" height="20" rx="2" fill="#e02a2a"/><path d="M888 741l8-7h6l-14 13z" fill="#4c7de8"/><rect x="899" y="738" width="13" height="15" rx="1.500" fill="#fff"/><text x="902" y="750" class="b" style="font-size:11px;fill:#d82020">T</text>
<rect x="924" y="724" width="40" height="40" rx="4" fill="#33315a"/>
<path d="M933 735l3-2h17v19h-17l-3 2z" fill="#e5124f"/><rect x="936" y="747" width="17" height="9" fill="#7d0c30"/>
<text x="940" y="746" class="b" style="font-size:14px;fill:#fff">A</text>
<text x="940" y="755" class="b" style="font-size:5.500px;fill:#fff" textLength="10">CAD</text>
<rect x="936" y="760" width="16" height="3" rx="1.500" fill="#2ad4f4"/>
<circle cx="988" cy="744" r="11.500" fill="#1ed760"/><path d="M981 740c5-1.500 10-1 14 1.500M982 744c4-1 8-.7 11.500 1.300M983 748c3-.8 6-.5 9 1" fill="none" stroke="#1a1a2a" stroke-width="1.800" stroke-linecap="round"/>
<rect x="985" y="761" width="5" height="2.500" rx="1.200" fill="#9a9aa8"/>
<path d="M1080 746l6-5 6 5" fill="none" stroke="#fff" stroke-width="1.500"/>
<rect x="1110" y="737" width="16" height="16" rx="1" fill="#1a5ab8" stroke="#fff" stroke-width=".8"/><rect x="1112" y="741" width="12" height="8" fill="#cce6ff"/>
<text x="1112" y="748" class="b" style="font-size:6.500px;fill:#1a4aa8" textLength="12">CCB</text>
<path d="M1144 749a4 4 0 0 1 0-8 6 6 0 0 1 11 1 3.500 3.500 0 0 1 0 7z" fill="#8a8a98"/><path d="M1143 738l14 14" stroke="#23204b" stroke-width="1.500"/><path d="M1144 737l14 14" stroke="#bbb"/>
<path d="M1189 737l-15 8 8 1 3 7z" fill="none" stroke="#5ad4e6" stroke-width="1.300"/>
<path d="M1207 742c4-4 11-4 15 0M1210 745c2.500-2.500 6.500-2.500 9 0M1212.500 748c1-1 3-1 4 0" fill="none" stroke="#fff" stroke-width="1.400"/><circle cx="1214.500" cy="750" r="1" fill="#fff"/>
<path d="M1231 742h3l4-3v12l-4-3h-3z" fill="none" stroke="#ddd"/><path d="M1241 743l4 4M1245 743l-4 4" stroke="#ddd"/>
<rect x="1256" y="740" width="12" height="9" rx="1" fill="none" stroke="#fff"/><rect x="1269" y="743" width="1.500" height="3" fill="#fff"/><path d="M1259 736l-2 6h3l-2 5" fill="none" stroke="#fff"/><rect x="1257" y="742" width="3" height="6" fill="#fff"/>
<text x="1318" y="740" textLength="29" style="fill:#f2f2f2">11:03</text>
<text x="1287" y="756" textLength="60" style="fill:#f2f2f2">10/10/2025</text>
</svg>
</body></html>
